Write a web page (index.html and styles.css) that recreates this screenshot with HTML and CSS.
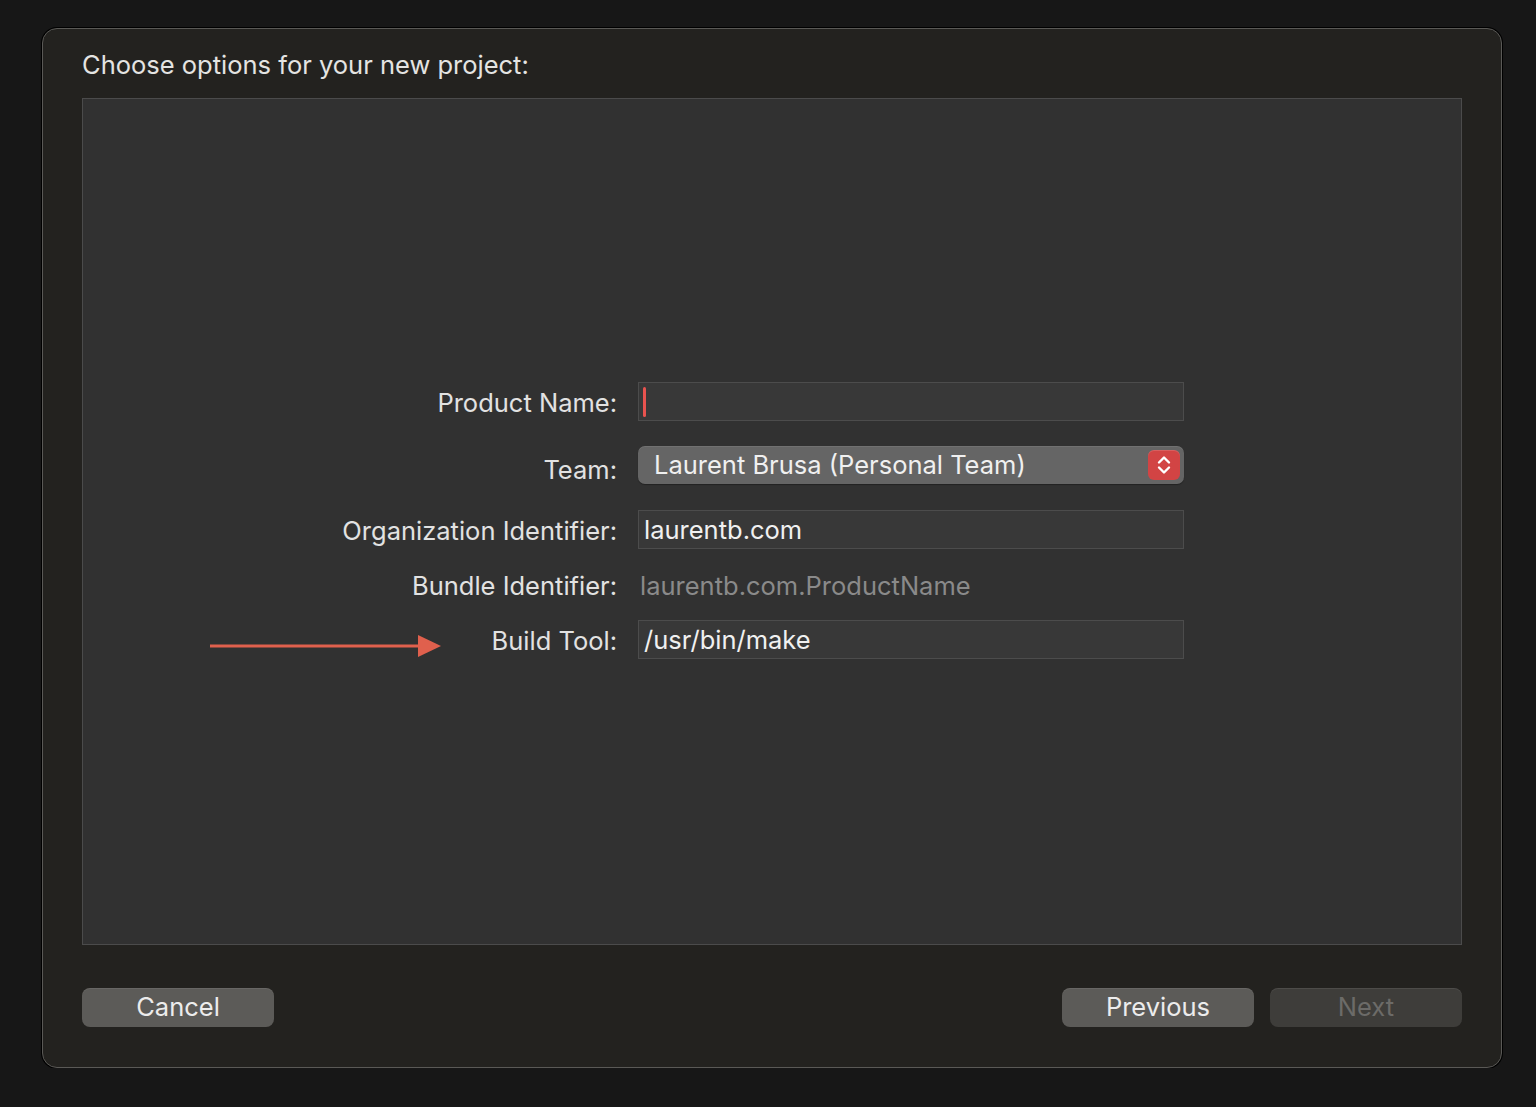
FILE: index.html
```html
<!DOCTYPE html>
<html>
<head>
<meta charset="utf-8">
<link rel="stylesheet" href="styles.css">
</head>
<body>
<div class="window">
  <div class="title">Choose options for your new project:</div>
  <div class="panel">
    <div class="arrow">
      <svg width="232" height="24" viewBox="0 0 232 24"><line x1="0" y1="12" x2="212" y2="12" stroke="#e0604d" stroke-width="3"/><polygon points="208,1 231,12 208,23" fill="#e0604d"/></svg>
    </div>
    <div class="form">
      <div class="label">Product Name:</div>
      <div class="field"><span class="caret"></span></div>

      <div class="label team-label">Team:</div>
      <div class="popup">
        <span class="popup-text">Laurent Brusa (Personal Team)</span>
        <span class="stepper">
          <svg width="16" height="22" viewBox="0 0 16 22"><path d="M3 8.5 L8 3.5 L13 8.5 M3 13.5 L8 18.5 L13 13.5" fill="none" stroke="#fff" stroke-width="2.4" stroke-linecap="round" stroke-linejoin="round"/></svg>
        </span>
      </div>

      <div class="label">Organization Identifier:</div>
      <div class="field">laurentb.com</div>

      <div class="label">Bundle Identifier:</div>
      <div class="static">laurentb.com.ProductName</div>

      <div class="label">Build Tool:</div>
      <div class="field">/usr/bin/make</div>
    </div>
  </div>
  <div class="buttons">
    <button class="btn">Cancel</button>
    <div class="spacer"></div>
    <button class="btn">Previous</button>
    <button class="btn disabled">Next</button>
  </div>
</div>
</body>
</html>
```
FILE: styles.css
```css
html, body {
  margin: 0;
  padding: 0;
  background: #171717;
}
body {
  padding: 28px 0 0 42px;
  font-family: "Inter", "Liberation Sans", sans-serif;
  color: #e6e6e6;
}
.window {
  box-sizing: border-box;
  width: 1460px;
  height: 1040px;
  background: #23221f;
  border: 1px solid #5a5956;
  border-radius: 15px;
  box-shadow: 0 0 0 1px #000;
  padding: 0 39px;
  display: flex;
  flex-direction: column;
}
.title {
  font-size: 25.5px;
  line-height: 30px;
  padding-top: 21px;
  margin-bottom: 18px;
  color: #e4e4e2;
}
.panel {
  position: relative;
  box-sizing: border-box;
  height: 847px;
  background: #313131;
  border: 1px solid #4b4b4b;
  padding-top: 283px;
}
.arrow {
  position: absolute;
  left: 127px;
  top: 535px;
  line-height: 0;
}
.form {
  display: grid;
  grid-template-columns: 534px 546px;
  grid-template-rows: 39px 39px 39px 21px 39px;
  column-gap: 21px;
  row-gap: 25px;
  font-size: 25.5px;
}
.label {
  justify-self: end;
  align-self: center;
  white-space: nowrap;
  color: #e2e2e2;
  line-height: 30px;
  padding-top: 3px;
}
.team-label {
  padding-top: 9px;
}
.field {
  box-sizing: border-box;
  height: 39px;
  background: #383838;
  border: 1px solid #4c4c4c;
  padding: 0 5px;
  line-height: 37px;
  color: #f0f0f0;
  display: flex;
  align-items: center;
}
.caret {
  width: 3px;
  height: 30px;
  border-radius: 2px;
  background: #e8534f;
  margin-left: -1px;
}
.static {
  color: #8a8a8a;
  line-height: 21px;
  padding-left: 2px;
  padding-top: 1px;
  white-space: nowrap;
}
.popup {
  box-sizing: border-box;
  height: 38px;
  background: #656565;
  border-radius: 7px;
  box-shadow: inset 0 1px 0 rgba(255,255,255,0.08), 0 1px 1px rgba(0,0,0,0.3);
  display: flex;
  align-items: center;
  padding: 0 4px 0 16px;
}
.popup-text {
  flex: 1;
  color: #f0f0f0;
  margin-top: -2px;
}
.stepper {
  width: 32px;
  height: 30px;
  border-radius: 6px;
  background: #d24444;
  box-shadow: inset 0 1px 0 rgba(255,255,255,0.15);
  display: flex;
  align-items: center;
  justify-content: center;
}
.buttons {
  display: flex;
  margin-top: 43px;
  gap: 16px;
}
.spacer {
  flex: 1;
}
.btn {
  width: 192px;
  height: 39px;
  border: none;
  border-radius: 8px;
  background: #5c5b58;
  box-shadow: inset 0 1px 0 rgba(255,255,255,0.08);
  color: #ececec;
  font-family: "Inter", "Liberation Sans", sans-serif;
  font-size: 25.5px;
  line-height: 37px;
  padding: 0 0 2px;
}
.btn.disabled {
  background: #3e3d3a;
  color: #6c6b68;
}
```
